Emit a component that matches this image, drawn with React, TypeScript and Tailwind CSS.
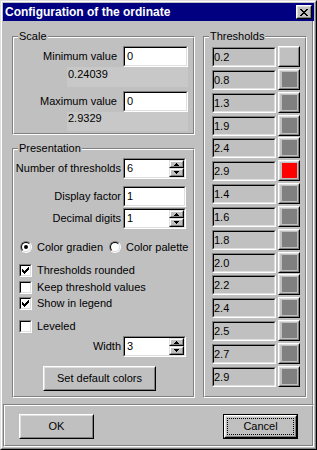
import React from "react";

type Kids = { className?: string; children?: React.ReactNode };

const thresholds = [
  { v: "0.2", c: "" },
  { v: "0.8", c: "bg-[#808080]" },
  { v: "1.3", c: "bg-[#808080]" },
  { v: "1.9", c: "bg-[#808080]" },
  { v: "2.4", c: "bg-[#808080]" },
  { v: "2.9", c: "bg-[#ff0000]" },
  { v: "1.4", c: "bg-[#808080]" },
  { v: "1.6", c: "bg-[#808080]" },
  { v: "1.8", c: "bg-[#808080]" },
  { v: "2.0", c: "bg-[#808080]" },
  { v: "2.2", c: "bg-[#808080]" },
  { v: "2.4", c: "bg-[#808080]" },
  { v: "2.5", c: "bg-[#808080]" },
  { v: "2.7", c: "bg-[#808080]" },
  { v: "2.9", c: "bg-[#808080]" },
];

// small pixel glyphs (close cross, check mark, spin arrows)
function Pixels({ rows, className = "" }: { rows: string[]; className?: string }) {
  return (
    <svg className={className} width={rows[0].length} height={rows.length} shapeRendering="crispEdges">
      {rows.flatMap((r, y) =>
        [...r].map((ch, x) =>
          ch === "#" ? <rect key={`${x}-${y}`} x={x} y={y} width="1" height="1" fill="#000" /> : null
        )
      )}
    </svg>
  );
}

const CROSS = ["##....##", ".##..##.", "..####..", "...##...", "..####..", ".##..##.", "##....##"];
const TICK = ["......#", ".....##", "#...###", "##.###.", "#####..", ".###...", "..#...."];
const UP = ["..#..", ".###.", "#####"];
const DOWN = ["#####", ".###.", "..#.."];

function Sunken({ className = "", inner = "bg-white", children }: Kids & { inner?: string }) {
  return (
    <div className={`flex border border-t-[#808080] border-l-[#808080] border-b-white border-r-white ${className}`}>
      <div className={`flex min-w-0 flex-1 border border-t-black border-l-black border-b-[#dfdfdf] border-r-[#dfdfdf] ${inner}`}>
        {children}
      </div>
    </div>
  );
}

function Raised({ className = "", children }: Kids) {
  return (
    <div className={`flex border border-t-white border-l-white border-b-black border-r-black ${className}`}>
      <div className="flex min-w-0 flex-1 items-center justify-center border border-t-[#dfdfdf] border-l-[#dfdfdf] border-b-[#808080] border-r-[#808080]">
        {children}
      </div>
    </div>
  );
}

function Etched({ className = "", inner = "", children }: Kids & { inner?: string }) {
  return (
    <div className={`border border-t-[#808080] border-l-[#808080] border-b-white border-r-white ${className}`}>
      <div className={`h-full border border-t-white border-l-white border-b-[#808080] border-r-[#808080] ${inner}`}>
        {children}
      </div>
    </div>
  );
}

function Group({ label, box, className = "", inner = "", children }: Kids & { label: string; box: string; inner?: string }) {
  return (
    <div className={`relative shrink-0 pt-[6px] ${className}`}>
      <Etched className={box} inner={inner}>
        {children}
      </Etched>
      <span className="absolute left-[6px] top-0 bg-[#c0c0c0] px-[1px] leading-[13px]">{label}</span>
    </div>
  );
}

function SpinHalf({ up, className = "" }: { up?: boolean; className?: string }) {
  return (
    <div className={`flex border border-t-[#dfdfdf] border-l-[#dfdfdf] border-b-black border-r-black ${className}`}>
      <div className="flex flex-1 items-center justify-center border border-t-white border-l-white border-b-[#808080] border-r-[#808080] bg-[#c0c0c0]">
        <Pixels rows={up ? UP : DOWN} />
      </div>
    </div>
  );
}

function Edit({ value, spin, w }: { value: string; spin?: boolean; w: string }) {
  return (
    <Sunken className={`h-[21px] ${w}`}>
      <span className="flex-1 pl-[2px] leading-[17px]">{value}</span>
      {spin && (
        <div className="flex w-[15px] flex-col">
          <SpinHalf up className="h-[8px]" />
          <SpinHalf className="flex-1" />
        </div>
      )}
    </Sunken>
  );
}

function Field({ label, value, spin, labelW, gap, w }: { label: string; value: string; spin?: boolean; labelW: string; gap: string; w: string }) {
  return (
    <div className="flex items-center">
      <span className={`text-right leading-[13px] ${labelW}`}>{label}</span>
      <div className={gap}>
        <Edit value={value} spin={spin} w={w} />
      </div>
    </div>
  );
}

function Check({ label, checked, className = "" }: { label: string; checked?: boolean; className?: string }) {
  return (
    <div className={`flex h-[13px] items-center gap-[5px] pl-[5px] ${className}`}>
      <Sunken className="h-[13px] w-[13px]">
        {checked && <Pixels rows={TICK} className="m-auto" />}
      </Sunken>
      <span className="leading-[13px]">{label}</span>
    </div>
  );
}

function Radio({ label, on, className = "" }: { label: string; on?: boolean; className?: string }) {
  return (
    <div className={`flex h-[12px] items-center gap-[5px] ${className}`}>
      <div className="h-[12px] w-[12px] rounded-full border border-t-[#808080] border-l-[#808080] border-b-white border-r-white">
        <div className="flex h-full w-full items-center justify-center rounded-full border border-t-black border-l-black border-b-[#dfdfdf] border-r-[#dfdfdf] bg-white">
          {on && <div className="h-[4px] w-[4px] rounded-full bg-black" />}
        </div>
      </div>
      <span className="leading-[13px]">{label}</span>
    </div>
  );
}

export default function App() {
  return (
    <div className="h-[450px] w-[317px] border border-t-[#dfdfdf] border-l-[#dfdfdf] border-b-black border-r-black bg-[#c0c0c0] font-['Liberation_Sans',Arial,sans-serif] text-[11px] text-black">
      <div className="flex h-full flex-col border border-t-white border-l-white border-b-[#808080] border-r-[#808080] p-[1px]">
        {/* title bar */}
        <div className="flex h-[18px] shrink-0 items-center justify-between bg-[#000080] px-[2px]">
          <span className="text-[12px] font-bold leading-[18px] text-white">Configuration of the ordinate</span>
          <Raised className="h-[14px] w-[16px] bg-[#c0c0c0]">
            <Pixels rows={CROSS} />
          </Raised>
        </div>

        {/* main panel */}
        <div className="flex h-[383px] shrink-0">
          <div className="flex flex-1 gap-[8px] pl-[9px] pt-[9px]">
            <div className="flex w-[183px] shrink-0 flex-col">
              <Group label="Scale" box="h-[99px]" inner="flex flex-col pt-[8px]">
                <Field label="Minimum value" value="0" labelW="w-[103px]" gap="ml-[6px]" w="w-[65px]" />
                <div className="ml-[53px] h-[20px] w-[121px] bg-[#c8c8c8] pl-[1px] pt-[1px] leading-[13px]">0.24039</div>
                <div className="mt-[4px]">
                  <Field label="Maximum value" value="0" labelW="w-[103px]" gap="ml-[6px]" w="w-[65px]" />
                </div>
                <div className="ml-[53px] h-[19px] w-[121px] bg-[#c8c8c8] pl-[1px] leading-[13px]">2.9329</div>
              </Group>

              <Group label="Presentation" box="h-[250px]" className="mt-[7px]" inner="flex flex-col pt-[8px]">
                <Field label="Number of thresholds" value="6" spin labelW="w-[107px]" gap="ml-[2px]" w="w-[63px]" />
                <div className="mt-[7px]">
                  <Field label="Display factor" value="1" labelW="w-[107px]" gap="ml-[2px]" w="w-[63px]" />
                </div>
                <div className="mt-[1px]">
                  <Field label="Decimal digits" value="1" spin labelW="w-[107px]" gap="ml-[2px]" w="w-[63px]" />
                </div>
                <div className="mt-[12px] flex pl-[6px]">
                  <Radio label="Color gradien" on className="w-[89px]" />
                  <Radio label="Color palette" />
                </div>
                <Check label="Thresholds rounded" checked className="mt-[11px]" />
                <Check label="Keep threshold values" className="mt-[4px]" />
                <Check label="Show in legend" checked className="mt-[3px]" />
                <Check label="Leveled" className="mt-[10px]" />
                <div className="mt-[3px]">
                  <Field label="Width" value="3" spin labelW="w-[107px]" gap="ml-[2px]" w="w-[63px]" />
                </div>
                <div className="mt-[9px] pl-[29px]">
                  <Raised className="h-[25px] w-[113px]">
                    <span className="leading-[13px]">Set default colors</span>
                  </Raised>
                </div>
              </Group>
            </div>

            <Group label="Thresholds" box="h-[362px]" className="w-[104px]" inner="pl-[7px] pt-[8px]">
              <div className="flex h-[341px] flex-col justify-between">
                {thresholds.map((t, i) => (
                  <div key={i} className="flex h-[21px] items-start gap-[2px]">
                    <Sunken className="mt-[1px] h-[20px] w-[64px]" inner="bg-[#c0c0c0]">
                      <span className="leading-[16px]">{t.v}</span>
                    </Sunken>
                    <Raised className="h-[21px] w-[22px]">
                      {t.c && <div className={`h-[15px] w-[15px] ${t.c}`} />}
                    </Raised>
                  </div>
                ))}
              </div>
            </Group>
          </div>
          <div className="w-[2px] shrink-0 border-l border-r border-l-[#808080] border-r-white" />
        </div>

        {/* buttons */}
        <Etched className="h-[43px] shrink-0" inner="flex items-start justify-between px-[14px] pt-[8px]">
          <Raised className="h-[25px] w-[75px]">
            <span className="leading-[13px]">OK</span>
          </Raised>
          <div className="flex h-[25px] w-[75px] border border-black">
            <Raised className="flex-1">
              <div className="m-[1px] flex flex-1 items-center justify-center self-stretch border border-dotted border-black">
                <span className="leading-[13px]">Cancel</span>
              </div>
            </Raised>
          </div>
        </Etched>
      </div>
    </div>
  );
}
